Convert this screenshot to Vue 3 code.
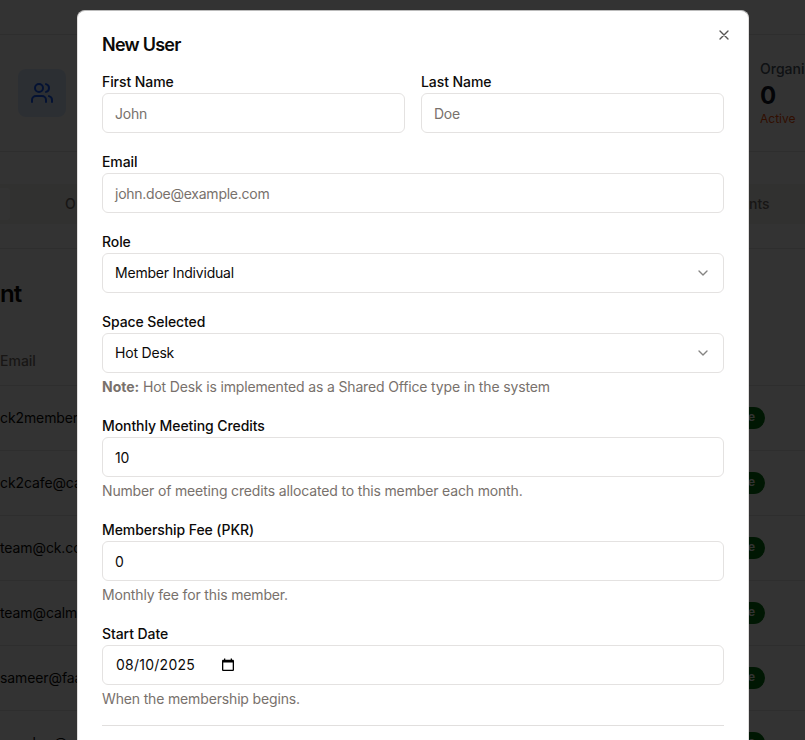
<script setup>
const rows = ['ck2member@gmail.com', 'ck2cafe@calmkaaj.com', 'team@ck.com', 'team@calmkaaj.com', 'sameer@faazil.com', 'member@calmkaaj.com']
const fields = [
  { id: 'email', label: 'Email', placeholder: 'john.doe@example.com' },
  { id: 'role', label: 'Role', value: 'Member Individual', select: true },
  { id: 'space', label: 'Space Selected', value: 'Hot Desk', select: true, strong: 'Note:', hint: 'Hot Desk is implemented as a Shared Office type in the system' },
  { id: 'credits', label: 'Monthly Meeting Credits', value: '10', hint: 'Number of meeting credits allocated to this member each month.' },
  { id: 'fee', label: 'Membership Fee (PKR)', value: '0', hint: 'Monthly fee for this member.' },
  { id: 'start', label: 'Start Date', value: '08/10/2025', date: true, hint: 'When the membership begins.' },
]
</script>

<template>
  <div class="screen">
    <div class="page">
      <div class="topbar"></div>
      <section class="stats">
        <div class="stat-icon">
          <svg width="24" height="24" viewBox="0 0 24 24" fill="none" stroke="currentColor" stroke-width="2" stroke-linecap="round" stroke-linejoin="round">
            <path d="M16 21v-2a4 4 0 0 0-4-4H6a4 4 0 0 0-4 4v2" />
            <circle cx="9" cy="7" r="4" />
            <path d="M22 21v-2a4 4 0 0 0-3-3.87" />
            <path d="M16 3.13a4 4 0 0 1 0 7.75" />
          </svg>
        </div>
        <div class="stat">
          <span class="stat-label">Organi</span>
          <span class="stat-value">0</span>
          <span class="stat-note">Active</span>
        </div>
      </section>
      <nav class="tabs">
        <span class="tab-active"></span>
        <span class="tab-first">O</span>
        <span class="tab-last">nts</span>
      </nav>
      <section class="table-card">
        <h2>nt</h2>
        <div class="thead">Email</div>
        <div v-for="row in rows" :key="row" class="row">
          <span class="mail">{{ row }}</span>
          <span class="badge">Active</span>
        </div>
      </section>
    </div>

    <div class="overlay">
      <div class="dialog">
        <div class="head">
          <h1>New User</h1>
          <button class="close" aria-label="Close">
            <svg width="16" height="16" viewBox="0 0 24 24" fill="none" stroke="currentColor" stroke-width="2" stroke-linecap="round"><path d="M18 6 6 18M6 6l12 12" /></svg>
          </button>
        </div>
        <div class="form">
          <div class="pair">
            <div class="field">
              <label>First Name</label>
              <div class="control placeholder">John</div>
            </div>
            <div class="field">
              <label>Last Name</label>
              <div class="control placeholder">Doe</div>
            </div>
          </div>
          <div v-for="f in fields" :key="f.id" class="field">
            <label>{{ f.label }}</label>
            <div class="control" :class="{ placeholder: f.placeholder, select: f.select, date: f.date }">
              <span>{{ f.value || f.placeholder }}</span>
              <svg v-if="f.select" class="chevron" width="16" height="16" viewBox="0 0 24 24" fill="none" stroke="currentColor" stroke-width="2" stroke-linecap="round" stroke-linejoin="round"><path d="m6 9 6 6 6-6" /></svg>
              <svg v-if="f.date" class="calendar" width="14" height="14" viewBox="0 0 14 14"><path fill="currentColor" fill-rule="evenodd" d="M3 .5h1.3v1.2h5.4V.5H11v1.2h.7c.7 0 1.3.5 1.3 1.2v8.8c0 .7-.6 1.3-1.3 1.3H2.3C1.6 13 1 12.4 1 11.700V2.900c0-.7.6-1.200 1.300-1.200H3zM2.300 4.500v7.200h9.400V4.500z" /></svg>
            </div>
            <p v-if="f.hint" class="hint"><strong v-if="f.strong">{{ f.strong }}</strong>{{ f.strong ? ' ' : '' }}{{ f.hint }}</p>
          </div>
        </div>
        <div class="divider"></div>
      </div>
    </div>
  </div>
</template>

<style>
body { margin: 0; overflow: hidden; }
</style>

<style scoped>
* { box-sizing: border-box; }
.screen { position: relative; width: 805px; height: 740px; overflow: hidden; font: 14px/20px Inter, sans-serif; color: #0c0a09; background: #fff; }
h1, h2, p { margin: 0; }
.page { height: 740px; overflow: hidden; background: #fefefd; }
.topbar { height: 34px; }
.stats { height: 118px; display: flex; justify-content: space-between; padding: 24px 0 0 18px; border: solid #e7e5e4; border-width: 1px 0; background: #fff; }
.stat-icon { width: 48px; height: 48px; margin-top: 10px; border-radius: 8px; display: grid; place-items: center; background: #dbeafe; color: #155dfc; }
.stat { width: 45px; display: flex; flex-direction: column; white-space: nowrap; }
.stat-label { color: #4b5563; font-weight: 500; }
.stat-value { padding-top: 1px; margin-bottom: -1px; font-size: 24px; line-height: 32px; font-weight: 700; color: #111827; }
.stat-note { font-size: 12px; line-height: 16px; color: #f54a00; }
.tabs { height: 40px; margin: 32px 0 24px; display: flex; align-items: center; background: #f5f5f0; color: #78716c; font-weight: 500; }
.tab-active { width: 10px; height: 32px; margin-right: 55px; border-radius: 0 4px 4px 0; background: #fff; }
.tab-first { width: 684px; }
.table-card { border-top: 1px solid #e7e5e4; background: #fff; }
h2 { padding: 29px 0 0; font-size: 24px; line-height: 32px; font-weight: 600; letter-spacing: -1px; }
.thead { height: 75px; padding: 41px 0 0; color: #78716c; font-weight: 500; }
.row { height: 65px; border-top: 1px solid #e7e5e4; display: flex; align-items: center; justify-content: space-between; padding-right: 40px; }
.mail { width: 77px; overflow: hidden; letter-spacing: -.1px; }
.badge { height: 22px; padding: 0 10px; border-radius: 11px; background: #00750f; color: #fafaf9; font-size: 12px; font-weight: 600; }
.overlay { position: absolute; inset: 0; display: flex; align-items: flex-start; padding: 10px 0 0 77px; background: rgba(0, 0, 0, .8); }
.dialog { width: 672px; height: 760px; padding: 24px; border: 1px solid #e0dedd; border-top-color: #bbb; border-radius: 8px; background: #fff; flex: none; }
.head { display: flex; justify-content: space-between; height: 40px; }
h1 { padding-top: 1px; font-size: 18px; line-height: 18px; font-weight: 600; letter-spacing: -.75px; }
.close { width: 16px; height: 16px; margin: -8px -8px 0 0; padding: 0; border: 0; background: none; color: #555352; }
.close svg { display: block; }
.form { display: grid; gap: 22px; }
.pair { display: grid; grid-template-columns: 1fr 1fr; gap: 16px; }
label { display: block; line-height: 14px; font-weight: 500; margin-bottom: 4px; letter-spacing: -.08px; }
.control { height: 40px; padding: 1px 12px 0; border: 1px solid #e4e2e1; border-radius: 6px; display: flex; align-items: center; letter-spacing: -.2px; }
.placeholder { color: #78716c; letter-spacing: -.25px; }
.select { justify-content: space-between; padding-top: 0; }
.chevron { color: #858483; }
.date { padding: 0 13px; gap: 26px; letter-spacing: .25px; }
.calendar { color: #000; }
.hint { margin-top: 4px; line-height: 20px; color: #78716c; letter-spacing: -.155px; }
.hint strong { letter-spacing: 0; }
.divider { height: 1px; margin-top: 16px; background: #e1dfde; }
</style>
